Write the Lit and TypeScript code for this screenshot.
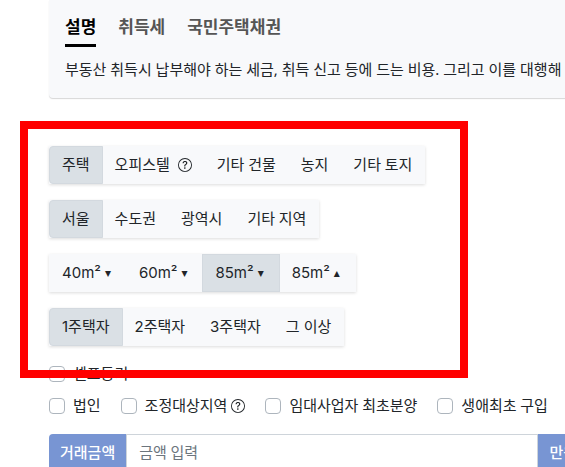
import { LitElement, html, css, svg } from "lit";
import { customElement, state } from "lit/decorators.js";

interface Option {
  label: string;
  mark?: string;
  help?: boolean;
}

interface Group {
  name: string;
  legend: string;
  numeric?: boolean;
  options: Option[];
}

const groups: Group[] = [
  {
    name: "kind",
    legend: "종류",
    options: [
      { label: "주택" },
      { label: "오피스텔", help: true },
      { label: "기타 건물" },
      { label: "농지" },
      { label: "기타 토지" },
    ],
  },
  {
    name: "region",
    legend: "지역",
    options: [{ label: "서울" }, { label: "수도권" }, { label: "광역시" }, { label: "기타 지역" }],
  },
  {
    name: "area",
    legend: "면적",
    numeric: true,
    options: [
      { label: "40m²", mark: "▾" },
      { label: "60m²", mark: "▾" },
      { label: "85m²", mark: "▾" },
      { label: "85m²", mark: "▴" },
    ],
  },
  {
    name: "count",
    legend: "주택 수",
    numeric: true,
    options: [{ label: "1주택자" }, { label: "2주택자" }, { label: "3주택자" }, { label: "그 이상" }],
  },
];

const helpIcon = html`<svg class="help" viewBox="0 0 16 16" aria-hidden="true">
  ${svg`<path d="M8 15A7 7 0 1 1 8 1a7 7 0 0 1 0 14zm0 1A8 8 0 1 0 8 0a8 8 0 0 0 0 16z"/>
  <path d="M5.255 5.786a.237.237 0 0 0 .241.247h.825c.138 0 .248-.113.266-.25.09-.656.54-1.134 1.342-1.134.686 0 1.314.343 1.314 1.168 0 .635-.374.927-.965 1.371-.673.489-1.206 1.06-1.168 1.987l.003.217a.25.25 0 0 0 .25.246h.811a.25.25 0 0 0 .25-.25v-.105c0-.718.273-.927 1.01-1.486.609-.463 1.244-.977 1.244-2.056 0-1.511-1.276-2.241-2.673-2.241-1.267 0-2.655.59-2.75 2.286zm1.557 5.763c0 .533.425.927 1.01.927.609 0 1.028-.394 1.028-.927 0-.552-.42-.94-1.029-.94-.584 0-1.009.388-1.009.94z"/>`}
</svg>`;

@customElement("app-root")
export class AppRoot extends LitElement {
  @state() private selected: Record<string, number> = { kind: 0, region: 0, area: 2, count: 0 };

  static styles = css`
    :host {
      display: block;
      position: relative;
      height: 100vh;
      overflow: hidden;
      background: #fff;
      color: #212529;
      font: 15px/24px Roboto, "Noto Sans CJK KR", sans-serif;
    }
    *,
    *::before {
      box-sizing: border-box;
    }
    .page {
      padding-left: 49px;
    }
    .panel {
      margin-right: -8px;
      padding: 14px 16px 17px;
      background: #f8f9fb;
      border-radius: 0 0 4px 4px;
      box-shadow: 0 1px 1px rgba(0, 0, 0, 0.16);
    }
    .tabs {
      display: flex;
      gap: 22px;
      margin-bottom: 10px;
    }
    .tab {
      padding: 0 0 3px;
      border: 0;
      border-bottom: 3px solid transparent;
      background: none;
      color: #555;
      font: 700 17px/27px Inter, "Noto Sans CJK KR", sans-serif;
      white-space: nowrap;
    }
    .tab.on {
      color: #000;
      border-color: #000;
    }
    .lead {
      margin: 0;
      font-family: "Noto Sans", "Noto Sans CJK KR", sans-serif;
      white-space: nowrap;
    }
    .groups {
      display: flex;
      flex-direction: column;
      align-items: flex-start;
      gap: 16px;
      padding-top: 48px;
    }
    .group {
      display: flex;
      margin: 0;
      padding: 0;
      border: 0;
      background: #f8f9fb;
      box-shadow: 0 1px 3px rgba(0, 0, 0, 0.14);
    }
    .group.numeric {
      font-family: Inter, "Noto Sans CJK KR", sans-serif;
    }
    .option {
      display: flex;
      align-items: center;
      height: 38px;
      padding: 0 12px;
      border: 1px solid transparent;
      background: none;
      color: inherit;
      font: inherit;
      white-space: nowrap;
    }
    .option + .option {
      margin-left: -1px;
    }
    .option.on {
      background: #dae0e5;
      border-color: #d3d9df;
    }
    .option.on:first-child {
      border-radius: 4px 0 0 4px;
    }
    .mark {
      width: 9px;
      margin-left: 4px;
      font: 12px/24px "DejaVu Sans", sans-serif;
      text-align: left;
    }
    .help {
      width: 14px;
      height: 14px;
      margin-left: 8px;
      fill: currentColor;
    }
    .checks {
      display: flex;
      flex-wrap: nowrap;
      gap: 20px;
      height: 32px;
      align-items: center;
    }
    .checks.first {
      margin-top: 12px;
    }
    .check {
      display: flex;
      align-items: center;
      white-space: nowrap;
    }
    .check input {
      appearance: none;
      width: 16px;
      height: 16px;
      margin: 0 8px 0 0;
      border: 1px solid #adb5bd;
      border-radius: 4px;
      background: #fff;
    }
    .check .help {
      margin-left: 4px;
    }
    .amount {
      display: flex;
      height: 38px;
      margin: 12px -23px 0 0;
    }
    .addon {
      display: flex;
      align-items: center;
      padding: 0 11px;
      background: #7895d3;
      color: #fff;
      font-weight: 500;
      white-space: nowrap;
    }
    .addon.start {
      border-radius: 4px 0 0 4px;
    }
    .field {
      flex: 1;
      min-width: 0;
      padding: 0 12px;
      border: 1px solid #ced4da;
      background: #fff;
      color: inherit;
      font: inherit;
    }
    .field::placeholder {
      color: #6c757d;
      opacity: 1;
    }
    .frame {
      position: absolute;
      left: 20px;
      top: 121px;
      width: 448px;
      height: 257px;
      border: 8px solid #f00;
      pointer-events: none;
    }
  `;

  private pick(name: string, index: number) {
    this.selected = { ...this.selected, [name]: index };
  }

  private check(label: string, help = false) {
    return html`<label class="check"><input type="checkbox" /><span>${label}</span>${help ? helpIcon : ""}</label>`;
  }

  render() {
    return html`
      <main class="page">
        <section class="panel">
          <nav class="tabs">
            <button class="tab on">설명</button>
            <button class="tab">취득세</button>
            <button class="tab">국민주택채권</button>
          </nav>
          <p class="lead">부동산 취득시 납부해야 하는 세금, 취득 신고 등에 드는 비용. 그리고 이를 대행해</p>
        </section>
        <form @submit=${(e: Event) => e.preventDefault()}>
          <div class="groups">
            ${groups.map(
              (g) => html`<div class="group ${g.numeric ? "numeric" : ""}" role="group" aria-label=${g.legend}>
                ${g.options.map(
                  (o, i) => html`<button
                    type="button"
                    class="option ${this.selected[g.name] === i ? "on" : ""}"
                    @click=${() => this.pick(g.name, i)}
                  ><span>${o.label}</span>${o.mark ? html`<span class="mark">${o.mark}</span>` : ""}${o.help
                      ? helpIcon
                      : ""}</button>`
                )}
              </div>`
            )}
          </div>
          <div class="checks first">${this.check("셀프등기")}</div>
          <div class="checks">
            ${this.check("법인")} ${this.check("조정대상지역", true)} ${this.check("임대사업자 최초분양")}
            ${this.check("생애최초 구입")}
          </div>
          <div class="amount">
            <label class="addon start" for="amount">거래금액</label>
            <input class="field" id="amount" type="text" placeholder="금액 입력" />
            <span class="addon">만원</span>
          </div>
        </form>
      </main>
      <div class="frame"></div>
    `;
  }
}
